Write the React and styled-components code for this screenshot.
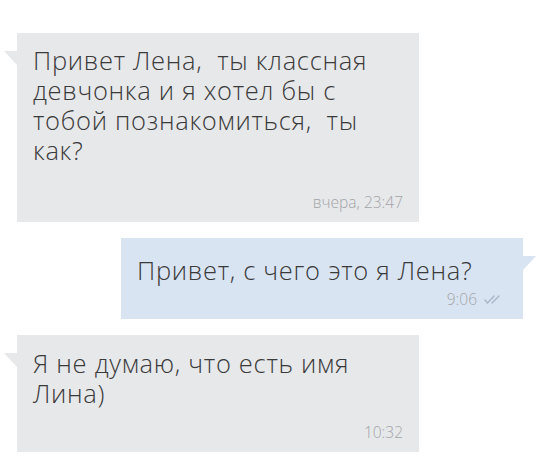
import React from "react";
import styled, { createGlobalStyle } from "styled-components";

const Global = createGlobalStyle`
  html, body { margin: 0; padding: 0; background: #ffffff; }
  body { font-family: "Open Sans", "Noto Sans", sans-serif; }
`;

const Page = styled.div`
  width: 540px;
  height: 461px;
  overflow: hidden;
  display: flex;
  flex-direction: column;
  gap: 16px;
  padding-top: 33px;
  box-sizing: border-box;
`;

const Bubble = styled.div`
  position: relative;
  width: 402px;
  box-sizing: border-box;
  align-self: ${(p) => (p.$out ? "flex-end" : "flex-start")};
  margin: ${(p) => (p.$out ? "0 17px 0 0" : "0 0 0 17px")};
  background: ${(p) => (p.$out ? "#d9e4f2" : "#e7e8ea")};
  padding: ${(p) => p.$pt}px ${(p) => (p.$out ? 18 : 16)}px 10px 16px;
  color: #3a3a3a;
  &::before {
    content: "";
    position: absolute;
    top: 18px;
    ${(p) => (p.$out ? "right: -13px;" : "left: -13px;")}
    width: 0;
    height: 0;
    border-top: 14px solid ${(p) => (p.$out ? "#d9e4f2" : "#e7e8ea")};
    ${(p) =>
      p.$out
        ? "border-right: 13px solid transparent;"
        : "border-left: 13px solid transparent;"}
  }
`;

const Text = styled.div`
  font-size: 25.5px;
  font-weight: 300;
  line-height: 30px;
  letter-spacing: 0.7px;
  white-space: pre;
`;

const Meta = styled.div`
  display: flex;
  justify-content: flex-end;
  align-items: center;
  gap: 6px;
  margin-top: ${(p) => p.$gap}px;
  font-size: 15.5px;
  font-weight: 300;
  line-height: 20px;
  color: #a3a4a7;
`;

const Ticks = () => (
  <svg width="22" height="9" viewBox="0 0 22 9" fill="none" stroke="#aab5c8" strokeWidth="1.4" strokeLinecap="round">
    <path d="M2 5 L4.5 8 L11 1" />
    <path d="M9 8 L16 1" />
  </svg>
);

export default function App() {
  return (
    <>
      <Global />
      <Page>
        <Bubble $pt={12}>
          <Text>{"Привет Лена,  ты классная\nдевчонка и я хотел бы с\nтобой познакомиться,  ты\nкак?"}</Text>
          <Meta $gap={27}>вчера, 23:47</Meta>
        </Bubble>
        <Bubble $out $pt={17}>
          <Text>Привет, с чего это я Лена?</Text>
          <Meta $gap={4}>
            9:06 <Ticks />
          </Meta>
        </Bubble>
        <Bubble $pt={13}>
          <Text>{"Я не думаю, что есть имя\nЛина)"}</Text>
          <Meta $gap={14}>10:32</Meta>
        </Bubble>
      </Page>
    </>
  );
}
